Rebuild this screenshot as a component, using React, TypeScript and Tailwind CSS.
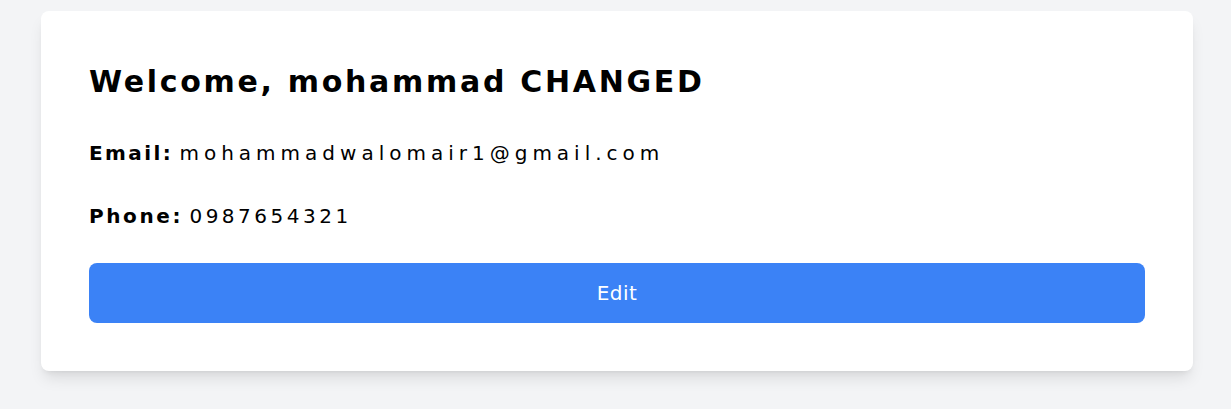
import React from "react";

export default function App() {
  return (
    <div className="min-h-[409px] bg-gray-100 pl-[41px] pr-[38px] pt-[11px] pb-[38px]" style={{ fontFamily: "'DejaVu Sans', sans-serif" }}>
      <div className="bg-white rounded-lg shadow-lg px-12 pb-12 pt-[53px]">
        <h1 className="text-[30px] leading-[36px] font-bold text-black tracking-[2.7px] whitespace-nowrap">Welcome, mohammad CHANGED</h1>
        <p className="mt-[39px] text-[20px] leading-7 text-black whitespace-nowrap">
          <span className="font-bold tracking-[2.4px]">Email:</span> <span className="tracking-[5px]">mohammadwalomair1@gmail.com</span>
        </p>
        <p className="mt-[35px] text-[20px] leading-7 text-black whitespace-nowrap">
          <span className="font-bold tracking-[2.6px]">Phone:</span> <span className="tracking-[3.5px]">0987654321</span>
        </p>
        <button className="mt-[33px] w-full h-[60px] rounded-lg bg-[#3b82f6] text-white text-[20px] tracking-[0.5px]">Edit</button>
      </div>
    </div>
  );
}
